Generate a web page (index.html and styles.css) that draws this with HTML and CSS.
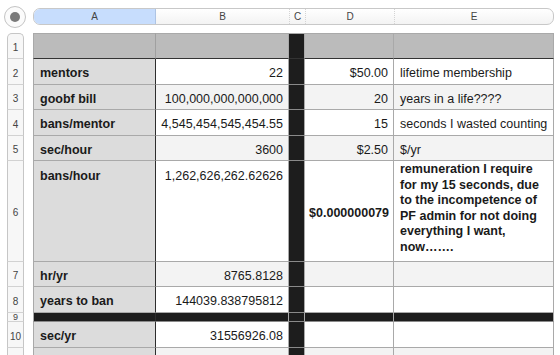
FILE: index.html
```html
<!DOCTYPE html>
<html lang="en">
  <head>
    <meta charset="UTF-8" />
    <meta name="viewport" content="width=device-width, initial-scale=1.0" />
    <title>Sheet 1</title>
    <link rel="stylesheet" href="styles.css">
  </head>
  <body>
    <div class="topbar">
      <div class="corner"><span class="dot"></span></div>
      <div class="colheads">
        <div class="ch ch-a sel">A</div>
        <div class="ch ch-b">B</div>
        <div class="ch ch-c">C</div>
        <div class="ch ch-d">D</div>
        <div class="ch ch-e">E</div>
      </div>
    </div>

    <div class="sheet">
      <!-- row 1 -->
      <div class="rh first"><span>1</span></div>
      <div class="cell lab head"></div>
      <div class="cell head"></div>
      <div class="cell blk head-line"></div>
      <div class="cell head"></div>
      <div class="cell head"></div>

      <!-- row 2 -->
      <div class="rh"><span>2</span></div>
      <div class="cell lab">mentors</div>
      <div class="cell num">22</div>
      <div class="cell blk"></div>
      <div class="cell num">$50.00</div>
      <div class="cell">lifetime membership</div>

      <!-- row 3 -->
      <div class="rh"><span>3</span></div>
      <div class="cell lab">goobf bill</div>
      <div class="cell num alt">100,000,000,000,000</div>
      <div class="cell blk"></div>
      <div class="cell num alt">20</div>
      <div class="cell alt">years in a life????</div>

      <!-- row 4 -->
      <div class="rh"><span>4</span></div>
      <div class="cell lab">bans/mentor</div>
      <div class="cell num">4,545,454,545,454.55</div>
      <div class="cell blk"></div>
      <div class="cell num">15</div>
      <div class="cell">seconds I wasted counting</div>

      <!-- row 5 -->
      <div class="rh"><span>5</span></div>
      <div class="cell lab">sec/hour</div>
      <div class="cell num alt">3600</div>
      <div class="cell blk"></div>
      <div class="cell num alt">$2.50</div>
      <div class="cell alt">$/yr</div>

      <!-- row 6 -->
      <div class="rh"><span>6</span></div>
      <div class="cell lab top">bans/hour</div>
      <div class="cell num top">1,262,626,262.62626</div>
      <div class="cell blk"></div>
      <div class="cell num bold">$0.000000079</div>
      <div class="cell note">remuneration I require<br>for my 15 seconds, due<br>to the incompetence of<br>PF admin for not doing<br>everything I want,<br>now…….</div>

      <!-- row 7 -->
      <div class="rh"><span>7</span></div>
      <div class="cell lab">hr/yr</div>
      <div class="cell num alt">8765.8128</div>
      <div class="cell blk"></div>
      <div class="cell alt"></div>
      <div class="cell alt"></div>

      <!-- row 8 -->
      <div class="rh"><span>8</span></div>
      <div class="cell lab">years to ban</div>
      <div class="cell num">144039.838795812</div>
      <div class="cell blk"></div>
      <div class="cell"></div>
      <div class="cell"></div>

      <!-- row 9 -->
      <div class="rh small"><span>9</span></div>
      <div class="cell lab blk"></div>
      <div class="cell blk"></div>
      <div class="cell blk"></div>
      <div class="cell blk"></div>
      <div class="cell blk"></div>

      <!-- row 10 -->
      <div class="rh"><span>10</span></div>
      <div class="cell lab">sec/yr</div>
      <div class="cell num">31556926.08</div>
      <div class="cell blk"></div>
      <div class="cell"></div>
      <div class="cell"></div>

      <!-- row 11 (only its top edge is in view) -->
      <div class="rh"><span></span></div>
      <div class="cell lab"></div>
      <div class="cell alt"></div>
      <div class="cell blk"></div>
      <div class="cell alt"></div>
      <div class="cell alt"></div>
    </div>
  </body>
</html>
```

FILE: styles.css
```css
body {
  margin: 0;
  background: #ffffff;
  font-family: "Liberation Sans", Arial, sans-serif;
  color: #1a1a1a;
  overflow: hidden;
}

/* top bar with column letters */
.topbar {
  display: flex;
  height: 33px;
  box-sizing: border-box;
  padding-top: 8px;
}
.corner {
  width: 22px;
  height: 22px;
  margin: -2px 7px 0 4px;
  border: 1px solid #c4c4c4;
  border-radius: 50%;
  box-sizing: border-box;
  background: #fbfbfb;
  display: flex;
  align-items: center;
  justify-content: center;
}
.dot {
  width: 10px;
  height: 10px;
  border-radius: 50%;
  background: #7a7a7a;
}
.colheads {
  display: flex;
  width: 521px;
  height: 17px;
  box-sizing: border-box;
  border: 1px solid #c8c8c8;
  border-radius: 7px;
  background: linear-gradient(#ffffff, #f3f3f3);
  overflow: hidden;
}
.ch {
  display: flex;
  align-items: center;
  justify-content: center;
  font-size: 10px;
  color: #444;
  border-right: 1px dotted #d4d4d4;
  box-sizing: border-box;
}
.ch-a { width: 122px; }
.ch-b { width: 134px; }
.ch-c { width: 16px; }
.ch-d { width: 89px; }
.ch-e { flex: 1; border-right: none; }
.ch.sel {
  background: #c7ddfd;
  border-right: 1px solid #aec4e4;
}

/* the grid */
.sheet {
  display: grid;
  grid-template-columns: 33px 123px 133px 16px 89px 160px;
  grid-template-rows: 26px 26px 25px 26px 25px 101px 25px 26px 9px 26px 26px;
  font-size: 12.5px;
}
.rh {
  display: flex;
}
.rh span {
  margin-left: 7px;
  width: 17px;
  box-sizing: border-box;
  border-left: 1px solid #c6c6c6;
  border-right: 1px solid #c6c6c6;
  border-bottom: 1px solid #d2d2d2;
  background: #f7f7f7;
  display: flex;
  align-items: center;
  justify-content: center;
  padding-top: 3px;
  font-size: 10px;
  color: #444;
}
.rh.first span {
  border-top: 1px solid #c6c6c6;
  border-radius: 5px 5px 0 0;
}
.rh.small span {
  font-size: 9px;
  padding-top: 0;
  line-height: 9px;
  align-items: flex-start;
  overflow: visible;
}

.cell {
  box-sizing: border-box;
  border-right: 1px solid #a9a9a9;
  border-bottom: 1px solid #a9a9a9;
  background: #ffffff;
  display: flex;
  align-items: center;
  padding: 4px 5px 0 6px;
  white-space: nowrap;
  line-height: 15px;
}
.cell.alt { background: #f3f3f3; }
.cell.num { justify-content: flex-end; }
.cell.lab {
  background: #dcdcdc;
  font-weight: bold;
  border-left: 1px solid #a9a9a9;
  border-right: 1px solid #2e2e2e;
}
.cell.head {
  background: #bbbbbb;
  border-top: 1px solid #a9a9a9;
  border-bottom: 1px solid #333333;
}
.cell.lab.head { border-right: 1px solid #a0a0a0; }
.cell.blk {
  background: #1d1d1d;
  border-bottom-color: #8a8a8a;
}
.cell.head-line {
  border-top: 1px solid #a9a9a9;
  border-bottom: 1px solid #333333;
}
.cell.top {
  align-items: flex-start;
  padding-top: 8px;
}
.cell.bold { font-weight: bold; padding-right: 4px; }
.cell.note {
  align-items: flex-start;
  padding-top: 1px;
  font-weight: bold;
  line-height: 15.5px;
}
```
